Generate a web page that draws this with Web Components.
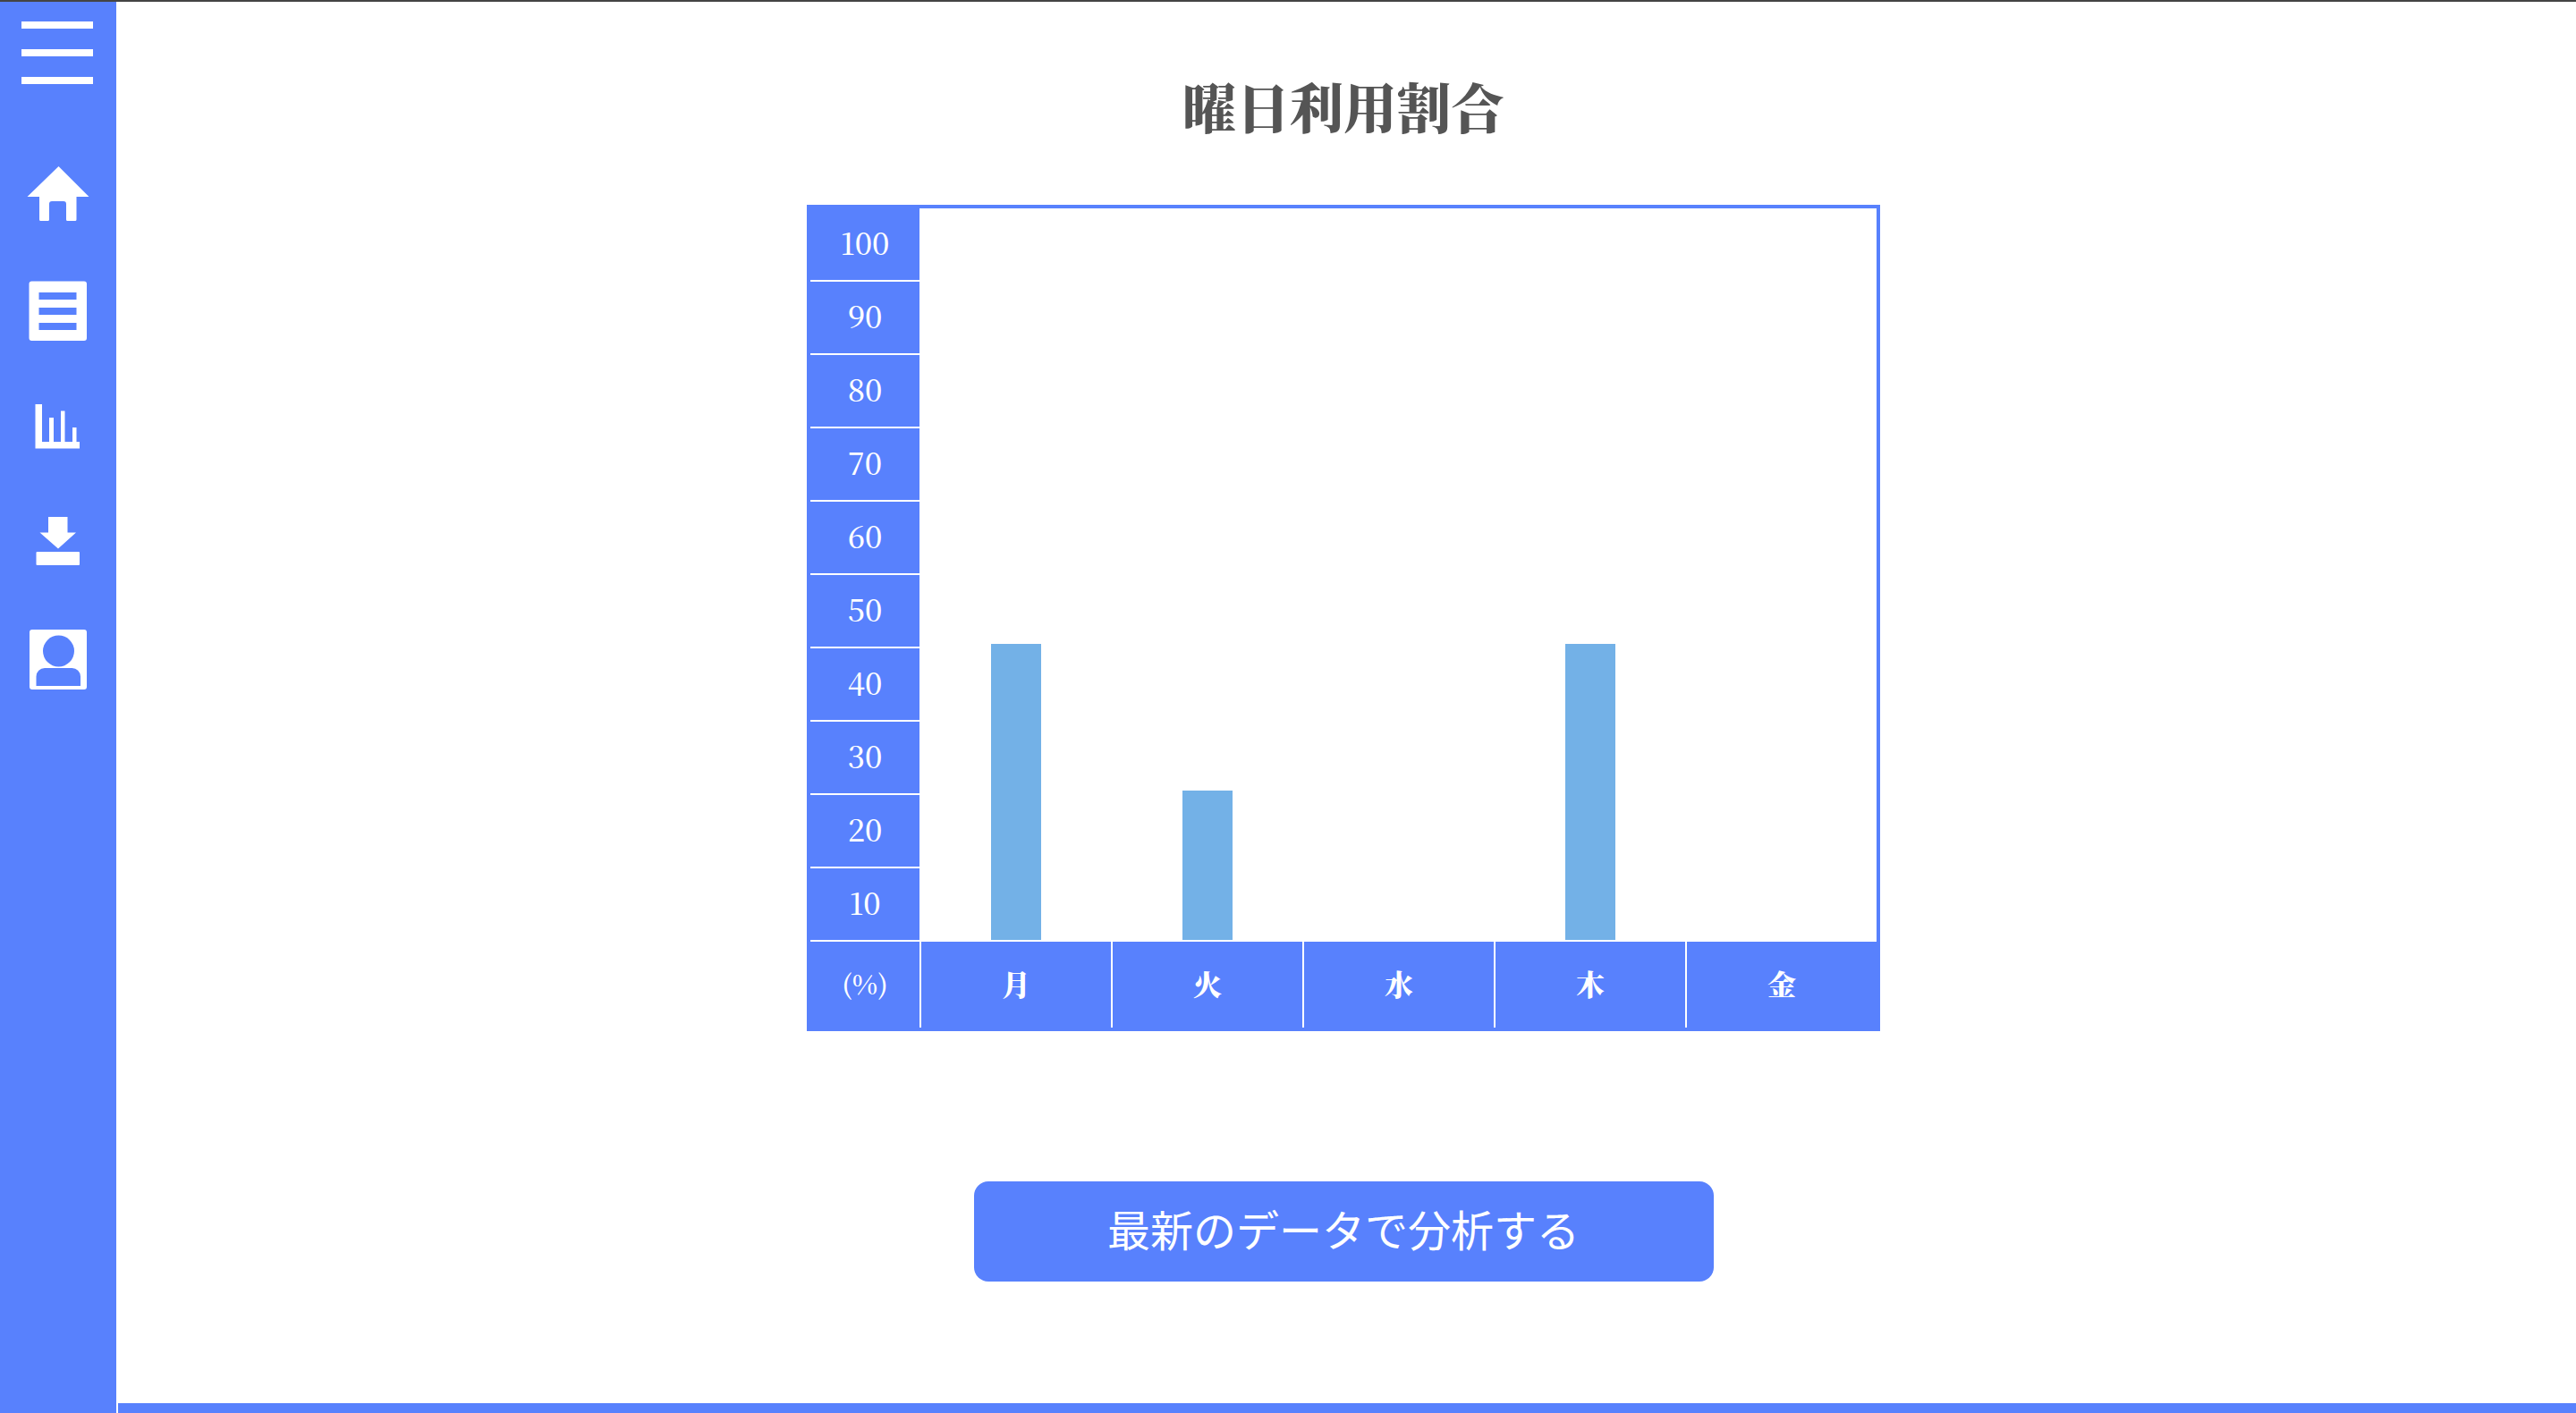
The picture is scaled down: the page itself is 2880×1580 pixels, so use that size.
<!DOCTYPE html>
<html lang="ja">
<head>
<meta charset="utf-8">
<title>曜日利用割合</title>
<style>
  :root {
    --blue: #5881fd;
    --bar: #73b1e7;
    --serif: "Noto Serif CJK JP", "Liberation Serif", "Noto Sans CJK JP", serif;
    --sans: "Noto Sans CJK JP", sans-serif;
  }
  body { margin: 0; background: #fff; }
</style>
</head>
<body>
<app-shell>
  <side-nav slot="nav"></side-nav>
  <page-title>曜日利用割合</page-title>
  <usage-chart>
    <day-column value="40">月</day-column>
    <day-column value="20">火</day-column>
    <day-column value="0">水</day-column>
    <day-column value="40">木</day-column>
    <day-column value="0">金</day-column>
  </usage-chart>
  <action-button>最新のデータで分析する</action-button>
</app-shell>
<script>
class BaseElement extends HTMLElement {
  connectedCallback() {
    if (this.shadowRoot) return;
    this.attachShadow({ mode: 'open' }).innerHTML = this.render();
  }
}

customElements.define('app-shell', class extends BaseElement {
  render() {
    return `<style>
      :host { display: flex; box-sizing: border-box; min-height: 100vh; border-top: 2px solid #444; }
      .page { flex: 1; display: flex; flex-direction: column; min-width: 0; }
      main { flex: 1; display: flex; flex-direction: column; align-items: center; padding: 76px 6px 80px 0; }
      footer { height: 11px; margin-left: 2px; background: var(--blue); }
    </style>
    <slot name="nav"></slot>
    <div class="page"><main><slot></slot></main><footer></footer></div>`;
  }
});

customElements.define('side-nav', class extends BaseElement {
  render() {
    const items = [
      ['ホーム', '<path d="M65.5 9 99.5 43H85.500V68.500Q85.500 70 84 70H75.500Q74 70 74 68.500V51Q74 48 71 48H58Q55 48 55 51V68.500Q55 70 53.500 70H45.500Q44 70 44 68.500V43H30.500Z"/>'],
      ['一覧', '<path fill-rule="evenodd" d="M35.500 7.500H94Q97 7.500 97 10.500V71Q97 74 94 74H35.500Q32.500 74 32.500 71V10.500Q32.500 7.500 35.500 7.500ZM43.500 20V28H85.500V20ZM43.500 37V45H85.500V37ZM43.500 54V62H85.500V54Z"/>'],
      ['分析', '<path d="M39.500 15H47V57H55V30H60V57H68V22.500H72.500V57H81V41H85.500V57H89V64.500H39.500Z"/>'],
      ['ダウンロード', '<path d="M54 11H75.500V28.500H85L65 46.500 44.500 28.500H54Z"/><rect x="40.500" y="50" width="48.500" height="15" rx="1"/>'],
      ['ユーザー', '<path fill-rule="evenodd" d="M36 7H94Q97 7 97 10V71Q97 74 94 74H36Q33 74 33 71V10Q33 7 36 7ZM65.500 13.500a17.500 17.500 0 1 0 0 35a17.500 17.500 0 1 0 0 -35ZM50 50A9.500 9.500 0 0 0 40.500 59.500V70H90V59.500A9.500 9.500 0 0 0 80.500 50Z"/>']
    ];
    return `<style>
      :host { display: block; flex: none; box-sizing: border-box; width: 130px; padding-top: 22px; background: var(--blue); }
      button { display: flex; flex-direction: column; justify-content: space-between; width: 80px; height: 70px; margin: 0 0 83px 24px; padding: 0; border: 0; background: none; cursor: pointer; }
      span { height: 8px; width: 100%; background: #fff; }
      nav { display: flex; flex-direction: column; gap: 50px; }
      a, svg { display: block; }
      svg { fill: #fff; }
    </style>
    <button type="button" aria-label="メニュー"><span></span><span></span><span></span></button>
    <nav>${items.map(([label, shape]) =>
      `<a href="#" aria-label="${label}"><svg width="130" height="80" viewBox="0 0 130 80" aria-hidden="true">${shape}</svg></a>`).join('')}</nav>`;
  }
});

customElements.define('page-title', class extends BaseElement {
  render() {
    return `<style>
      :host { display: block; margin-bottom: 71px; }
      h1 { margin: 0; font: 900 60px/80px var(--serif); color: #555; }
    </style><h1><slot></slot></h1>`;
  }
});

customElements.define('usage-chart', class extends BaseElement {
  render() {
    const steps = [100, 90, 80, 70, 60, 50, 40, 30, 20, 10];
    return `<style>
      :host { display: flex; box-sizing: border-box; width: 1200px; max-width: 100%; border: 4px solid var(--blue); font: 500 34px/40px var(--serif); }
      .axis { flex: none; width: 122px; background: var(--blue); color: #fff; text-align: center; }
      .step { height: 80px; line-height: 76px; border-bottom: 2px solid #fff; }
      .unit { height: 96px; font-size: 30px; font-weight: 600; line-height: 92px; }
      .days { flex: 1; display: flex; }
    </style>
    <div class="axis">${steps.map(n => `<div class="step">${n}</div>`).join('')}<div class="unit">(%)</div></div>
    <div class="days"><slot></slot></div>`;
  }
});

customElements.define('day-column', class extends BaseElement {
  render() {
    const value = Number(this.getAttribute('value'));
    return `<style>
      :host { flex: 1; display: flex; flex-direction: column; }
      .plot { flex: 1; display: flex; align-items: flex-end; justify-content: center; box-sizing: border-box; padding: 0 0 2px 2px; }
      .bar { width: 56px; height: calc(82px * ${value / 10} + 3px); background: var(--bar); }
      .day { height: 96px; border-left: 2px solid #fff; background: var(--blue); color: #fff; font: 900 32px/92px var(--serif); text-align: center; }
    </style>
    <div class="plot">${value ? '<div class="bar"></div>' : ''}</div>
    <div class="day"><slot></slot></div>`;
  }
});

customElements.define('action-button', class extends BaseElement {
  render() {
    return `<style>
      :host { display: block; margin-top: 168px; }
      button { display: block; box-sizing: border-box; width: 827px; height: 112px; padding: 0 0 8px; border: 0; border-radius: 16px; background: var(--blue); color: #fff; font: 400 48px/104px var(--sans); cursor: pointer; }
    </style><button type="button"><slot></slot></button>`;
  }
});
</script>
</body>
</html>
